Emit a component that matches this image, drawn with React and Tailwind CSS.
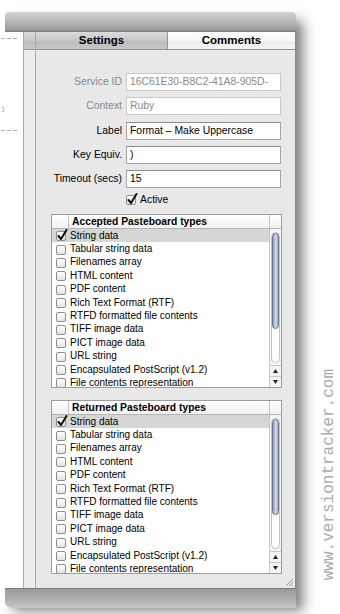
import React from 'react';

const FONT = { fontFamily: '"Liberation Sans", Arial, sans-serif' };

const TYPES = [
  'String data',
  'Tabular string data',
  'Filenames array',
  'HTML content',
  'PDF content',
  'Rich Text Format (RTF)',
  'RTFD formatted file contents',
  'TIFF image data',
  'PICT image data',
  'URL string',
  'Encapsulated PostScript (v1.2)',
  'File contents representation',
];

function Check({ checked }) {
  return (
    <span className="relative inline-block w-[10px] h-[10px] rounded-[2px] border border-[#8e8e8e] bg-[linear-gradient(#ffffff,#e4e4e4)]">
      {checked && (
        <svg className="absolute left-[0px] top-[-3px]" width="11" height="12" viewBox="0 0 11 12">
          <path d="M1.5 7 L4 10 L9.5 1" fill="none" stroke="#111" strokeWidth="2" strokeLinecap="round" strokeLinejoin="round" />
        </svg>
      )}
    </span>
  );
}

function Field({ label, value, disabled }) {
  return (
    <div className="flex items-center h-[18px]">
      <div className={`w-[86px] text-right text-[10.4px] ${disabled ? 'text-[#8a8a8a]' : 'text-black'}`}>{label}</div>
      <div className={`ml-[4px] w-[155px] h-[18px] flex items-center pl-[3px] text-[10.4px] bg-white border ${disabled ? 'border-[#c9c9c9] text-[#8a8a8a]' : 'border-[#a6a6a6] border-t-[#8c8c8c] text-black'}`}>
        {value}
      </div>
    </div>
  );
}

function Scroller() {
  return (
    <div className="w-[12px] border-l border-[#c8c8c8] bg-[#f4f4f4] flex flex-col">
      <div className="flex-1 px-[1px] pt-[3px] pb-[2px]">
        <div className="h-full rounded-full border border-[#c4c4c4] bg-white flex flex-col">
          <div className="h-[96px] rounded-full border border-[#66758d] bg-[linear-gradient(to_right,#8d9bb1,#d3dbe6_55%,#a4b1c4)]" />
        </div>
      </div>
      <div className="h-[11px] border-t border-[#c8c8c8] flex items-center justify-center">
        <svg width="5" height="4" viewBox="0 0 5 4"><path d="M2.5 0 L5 4 L0 4 Z" fill="#222" /></svg>
      </div>
      <div className="h-[11px] border-t border-[#c8c8c8] flex items-center justify-center">
        <svg width="5" height="4" viewBox="0 0 5 4"><path d="M0 0 L5 0 L2.5 4 Z" fill="#222" /></svg>
      </div>
    </div>
  );
}

function TypeTable({ title, bodyH }) {
  return (
    <div className="ml-[15px] w-[231px] border border-[#9d9d9d] bg-white">
      <div className="h-[14px] flex border-b border-[#b4b4b4] bg-[linear-gradient(#ffffff,#f1f1f1)]">
        <div className="w-[17px] border-r border-[#c4c4c4]" />
        <div className="flex-1 pl-[3px] text-[10.3px] font-bold leading-[13px]">{title}</div>
        <div className="w-[12px] border-l border-[#c4c4c4]" />
      </div>
      <div className="flex" style={{ height: bodyH }}>
        <div className="flex-1 overflow-hidden">
          {TYPES.map((t, i) => (
            <div key={t} className={`h-[13.4px] flex items-center ${i === 0 ? 'bg-[#d6d6d6]' : ''}`}>
              <div className="w-[18px] flex justify-center pt-[1px]">
                <Check checked={i === 0} />
              </div>
              <span className="text-[10px] leading-none whitespace-nowrap">{t}</span>
            </div>
          ))}
        </div>
        <Scroller />
      </div>
    </div>
  );
}

function Dashes() {
  return (
    <div className="flex gap-[2px] pl-[1px]">
      <span className="w-[4px] h-[1px] bg-[#b0b0b0]" />
      <span className="w-[4px] h-[1px] bg-[#b0b0b0]" />
      <span className="w-[4px] h-[1px] bg-[#b0b0b0]" />
    </div>
  );
}

export default function App() {
  return (
    <div className="w-[340px] h-[614px] bg-white flex overflow-hidden text-black" style={FONT}>
      <div className="w-[296px] mt-[12px] h-[596px] flex flex-col shadow-[10px_6px_12px_-3px_rgba(0,0,0,0.5)]">
        {/* title bar */}
        <div className="ml-[5px] h-[20px] rounded-t-[4px] bg-[linear-gradient(#d2d2d2,#a2a2a2_85%,#8e8e8e)] border-b border-[#7c7c7c]" />

        <div className="h-[556px] flex">
          {/* left list pane */}
          <div className="w-[23px] bg-white pt-[6px]">
            <Dashes />
            <div className="mt-[68px] ml-[2px] w-[2px] h-[5px] border border-l-0 border-[#c0c0c0]" />
            <div className="mt-[18px]"><Dashes /></div>
          </div>
          {/* split view divider */}
          <div className="w-[13px] flex flex-col border-l border-r border-[#a8a8a8] bg-[#ececec]">
            <div className="h-[18px] border-b border-[#9a9a9a] bg-[linear-gradient(#dcdcdc,#c8c8c8_50%,#bcbcbc_51%,#c6c6c6)]" />
          </div>

          {/* settings panel */}
          <div className="flex-1 flex flex-col bg-[#e8e8e8] border-r border-[#8c8c8c]">
            <div className="h-[18px] flex border-b border-[#8f8f8f]">
              <div className="w-[131px] flex items-center justify-center text-[11.5px] font-bold bg-[linear-gradient(#dcdcdc,#c8c8c8_50%,#bcbcbc_51%,#c6c6c6)]">
                Settings
              </div>
              <div className="flex-1 flex items-center justify-center text-[11.5px] font-bold border-l border-[#9a9a9a] bg-[linear-gradient(#ffffff,#f6f6f6_50%,#ebebeb_51%,#f3f3f3)]">
                Comments
              </div>
            </div>

            <div className="pt-[23px] flex flex-col gap-[6.25px]">
              <Field label="Service ID" value="16C61E30-B8C2-41A8-905D-" disabled />
              <Field label="Context" value="Ruby" disabled />
              <Field label="Label" value="Format – Make Uppercase" />
              <Field label="Key Equiv." value=")" />
              <Field label="Timeout (secs)" value="15" />
            </div>

            <div className="mt-[5px] h-[13px] pl-[90px] flex items-center gap-[4px]">
              <span className="pt-[1px]"><Check checked /></span>
              <span className="text-[10.4px]">Active</span>
            </div>

            <div className="mt-[8px]">
              <TypeTable title="Accepted Pasteboard types" bodyH={158} />
            </div>
            <div className="mt-[12px]">
              <TypeTable title="Returned Pasteboard types" bodyH={158} />
            </div>

            <div className="flex-1 flex items-end justify-end pr-[1px] pb-[1px]">
              <svg width="9" height="9" viewBox="0 0 9 9">
                <path d="M8 1 L1 8 M8 4 L4 8 M8 7 L7 8" stroke="#9a9a9a" strokeWidth="1" />
              </svg>
            </div>
          </div>
        </div>

        {/* bottom bar */}
        <div className="ml-[5px] h-[20px] rounded-bl-[6px] border-t border-[#7a7a7a] bg-[linear-gradient(#9a9a9a,#adadad_50%,#c8c8c8)]" />
      </div>

      {/* watermark */}
      <div className="flex-1 flex flex-col justify-end pb-[34px] pl-[25px]">
        <div
          className="[writing-mode:vertical-rl] rotate-180 text-[16px] leading-none text-[#a9a9a9] whitespace-nowrap"
          style={{ fontFamily: '"Liberation Mono", "DejaVu Sans Mono", monospace' }}
        >
          www.versiontracker.com
        </div>
      </div>
    </div>
  );
}
